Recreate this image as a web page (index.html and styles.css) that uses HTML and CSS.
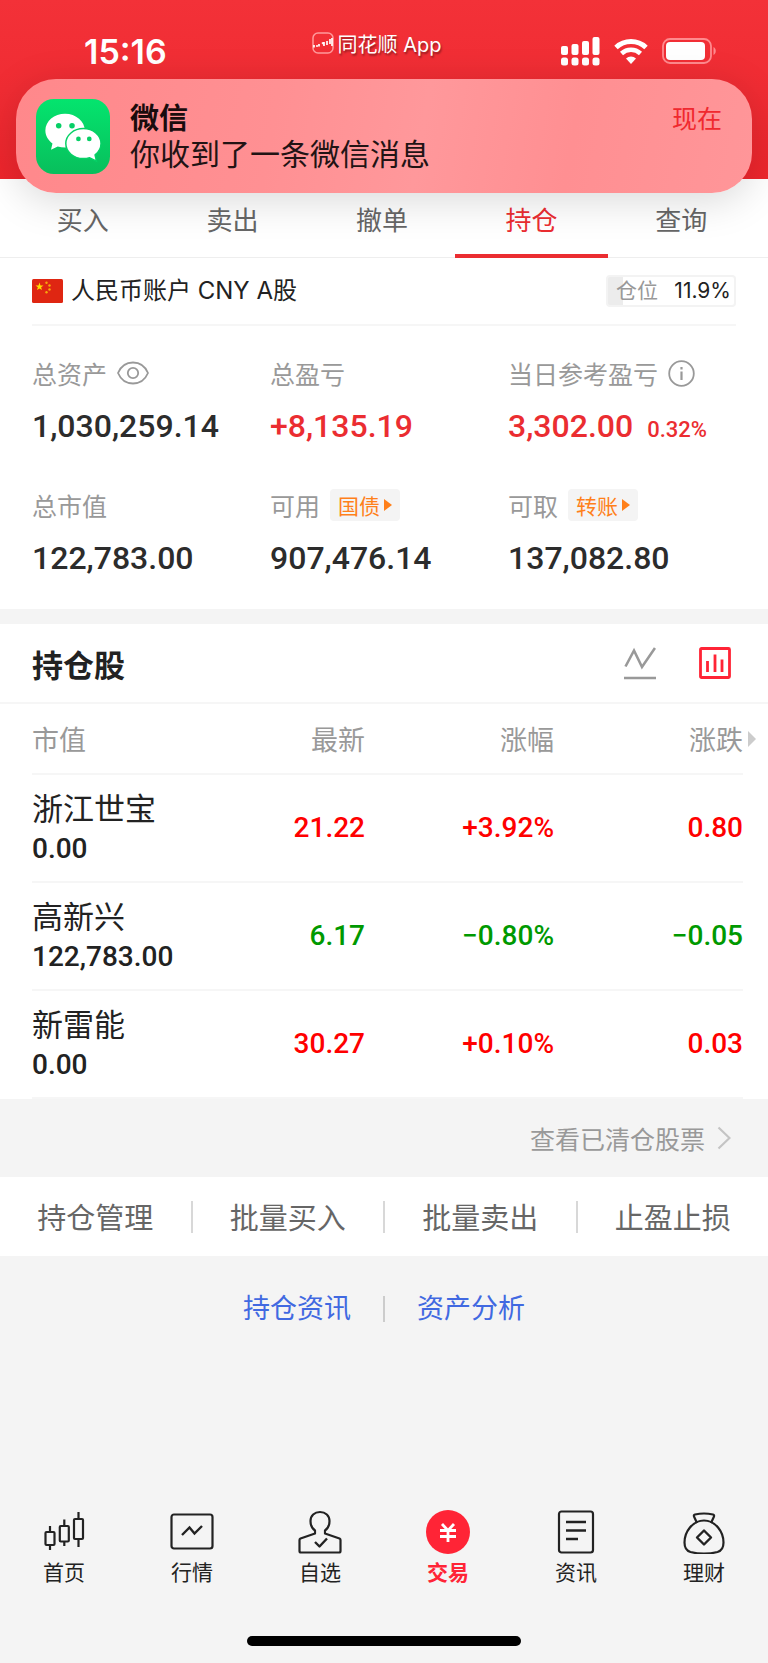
FILE: index.html
```html
<!DOCTYPE html>
<html lang="zh-CN">
<head>
	<meta charset="utf-8">
	<meta name="viewport" content="width=device-width, initial-scale=1"/>
	<title>持仓</title>
	<link rel="stylesheet" href="styles.css">
</head>
<body>
	<header class="top">
		<div class="status">
			<div class="clock">15:16</div>
			<div class="app">
				<svg width="22" height="22" viewBox="0 0 22 22" fill="none">
					<rect x="1" y="1" width="20" height="20" rx="5" stroke="#ff9a9c" stroke-width="1.5"/>
					<path d="M2 13v2.500M4 14h2M7 12v2.500M10 10.500l2 2M12 10v4M15 9v4M18 7v5M20 6v8" stroke="#fff" stroke-width="1.700"/>
				</svg>
				同花顺 App
			</div>
			<div class="signs">
				<svg width="39" height="29" viewBox="0 0 39 29" fill="#fff">
					<rect x="0" y="9" width="7" height="9" rx="2"/>
					<rect x="10.500" y="7" width="7" height="11" rx="2"/>
					<rect x="21" y="4" width="7" height="14" rx="2"/>
					<rect x="31.500" y="0" width="7" height="18" rx="2"/>
					<rect x="0" y="20.500" width="7" height="8" rx="2.500"/>
					<rect x="10.500" y="20.500" width="7" height="8" rx="2.500"/>
					<rect x="21" y="20.500" width="7" height="8" rx="2.500"/>
					<rect x="31.500" y="20.500" width="7" height="8" rx="2.500"/>
				</svg>
				<svg width="34" height="25" viewBox="0 0 34 25" fill="none" stroke="#fff">
					<path d="M2 8.500a22 22 0 0 1 30 0" stroke-width="5"/>
					<path d="M7.500 14.500a14 14 0 0 1 19 0" stroke-width="4.500"/>
					<path d="M17 25l-5-5.500a7.500 7.500 0 0 1 10 0z" fill="#fff" stroke="none"/>
				</svg>
				<svg width="55" height="26" viewBox="0 0 55 26">
					<rect x="1" y="1" width="48" height="24" rx="7" fill="none" stroke="#ff8a8e" stroke-width="1.800"/>
					<rect x="4" y="4" width="39" height="18" rx="4" fill="#fff"/>
					<path d="M51.500 9c3 1.500 3 6.500 0 8z" fill="#ff8a8e"/>
				</svg>
			</div>
		</div>
		<div class="notice">
			<svg width="74" height="75" viewBox="0 0 75 76">
				<defs>
					<linearGradient id="wx" x1="0" y1="0" x2="0" y2="1">
						<stop offset="0" stop-color="#04e46e"/>
						<stop offset="1" stop-color="#08bf5c"/>
					</linearGradient>
				</defs>
				<rect width="75" height="76" rx="18" fill="url(#wx)"/>
				<path d="M29.500 15C18.500 15 9.500 22.500 9.500 32c0 5.300 2.800 10 7.200 13.100L15.200 51.500l6.800-3.300c2.400.7 4.900 1 7.500 1 11 0 20-7.500 20-17S40.500 15 29.500 15z" fill="#fff"/>
				<path d="M48 30c-9.800 0-17.800 6.700-17.800 15.200S38.200 60.400 48 60.400c2.200 0 4.400-.3 6.300-.9l7 3.500-1.400-6.300c3.700-2.800 6-6.900 6-11.500C65.900 36.700 57.800 30 48 30z" fill="#fff" stroke="#06d166" stroke-width="1.500"/>
				<g fill="#07cf66">
					<circle cx="23" cy="27" r="2.800"/><circle cx="36.500" cy="27" r="2.800"/>
					<circle cx="43" cy="40.500" r="2.400"/><circle cx="54" cy="40.500" r="2.400"/>
				</g>
			</svg>
			<div class="msg">
				<div class="from">微信</div>
				<div>你收到了一条微信消息</div>
			</div>
			<div class="when">现在</div>
		</div>
	</header>

	<nav class="tabs">
		<a href="#">买入</a>
		<a href="#">卖出</a>
		<a href="#">撤单</a>
		<a href="#" class="on">持仓</a>
		<a href="#">查询</a>
	</nav>

	<section class="account">
		<div class="who">
			<svg width="31" height="24" viewBox="0 0 31 24">
				<rect width="31" height="24" rx="1.500" fill="#df2612"/>
				<path d="M7.500 3.500l1 2.900h3l-2.400 1.800.9 2.900-2.500-1.700L5 11.100l.9-2.900-2.400-1.800h3z" fill="#ffde00"/>
				<g fill="#f7a80c">
					<circle cx="14.500" cy="3.800" r="1.200"/><circle cx="17.500" cy="6.500" r="1.200"/>
					<circle cx="17.500" cy="10.500" r="1.200"/><circle cx="14.500" cy="13.300" r="1.200"/>
				</g>
			</svg>
			<span>人民币账户 CNY A股</span>
			<div class="ratio"><span>仓位</span><b>11.9%</b></div>
		</div>
		<div class="stats">
			<div>
				<div class="label">总资产
					<button class="ico" aria-label="隐藏金额"><svg width="32" height="24" viewBox="0 0 32 24" fill="none" stroke="#999" stroke-width="1.800">
						<path d="M1 12C7 -2 25 -2 31 12C25 26 7 26 1 12z"/>
						<circle cx="16" cy="12" r="5.200"/>
					</svg></button>
				</div>
				<div class="num">1,030,259.14</div>
			</div>
			<div>
				<div class="label">总盈亏</div>
				<div class="num red">+8,135.19</div>
			</div>
			<div>
				<div class="label">当日参考盈亏
					<button class="ico" aria-label="说明"><svg width="27" height="27" viewBox="0 0 27 27" fill="none" stroke="#999" stroke-width="1.800">
						<circle cx="13.500" cy="13.500" r="12.300"/>
						<path d="M13.500 11.500v8.500M13.500 7v2.500" stroke-width="2.200"/>
					</svg></button>
				</div>
				<div class="num red">3,302.00<small>0.32%</small></div>
			</div>
			<div>
				<div class="label">总市值</div>
				<div class="num">122,783.00</div>
			</div>
			<div>
				<div class="label">可用<button class="chip">国债</button></div>
				<div class="num">907,476.14</div>
			</div>
			<div>
				<div class="label">可取<button class="chip">转账</button></div>
				<div class="num">137,082.80</div>
			</div>
		</div>
	</section>

	<section class="hold">
		<div class="head">
			<h2>持仓股</h2>
			<button class="ico" aria-label="走势"><svg width="32" height="33" viewBox="0 0 32 33" fill="none" stroke="#999" stroke-width="2.600">
				<path d="M1.500 19.500L10 3.500l8 16.500L31 1M0 31h32"/>
			</svg></button>
			<button class="ico" aria-label="列表"><svg width="32" height="32" viewBox="0 0 32 32" fill="none" stroke="#ff2436" stroke-width="2.800">
				<rect x="1.500" y="1.500" width="29" height="29" rx="1"/>
				<path d="M8.500 14v11M16 7.500V25M23 12.500V25"/>
			</svg></button>
		</div>
		<table>
			<thead>
				<tr><th>市值</th><th>最新</th><th>涨幅</th><th class="more">涨跌</th></tr>
			</thead>
			<tbody>
				<tr class="up"><td><div class="name">浙江世宝</div>0.00</td><td>21.22</td><td>+3.92%</td><td>0.80</td></tr>
				<tr class="down"><td><div class="name">高新兴</div>122,783.00</td><td>6.17</td><td>−0.80%</td><td>−0.05</td></tr>
				<tr class="up"><td><div class="name">新雷能</div>0.00</td><td>30.27</td><td>+0.10%</td><td>0.03</td></tr>
			</tbody>
		</table>
	</section>

	<a href="#" class="cleared">查看已清仓股票
		<svg width="14" height="24" viewBox="0 0 14 24" fill="none" stroke="#c4c4c4" stroke-width="2.200"><path d="M1.500 1.500L12.500 12l-11 10.500"/></svg>
	</a>

	<div class="acts">
		<button>持仓管理</button>
		<button>批量买入</button>
		<button>批量卖出</button>
		<button>止盈止损</button>
	</div>

	<div class="links">
		<a href="#">持仓资讯</a>
		<a href="#">资产分析</a>
	</div>

	<nav class="bar">
		<a href="#">
			<svg width="44" height="44" viewBox="0 0 44 44" fill="none" stroke="#222" stroke-width="2.200">
				<rect x="3.500" y="22" width="9" height="13" rx="1"/><path d="M8 16v6M8 35v5"/>
				<rect x="17.800" y="16" width="9" height="15.500" rx="1"/><path d="M22.300 9.500V16M22.300 31.500V36"/>
				<rect x="32" y="9" width="9" height="20" rx="1"/><path d="M36.500 2v7M36.500 29v8"/>
			</svg>
			首页
		</a>
		<a href="#">
			<svg width="44" height="44" viewBox="0 0 44 44" fill="none" stroke="#222" stroke-width="2.200">
				<rect x="1.500" y="4.500" width="41" height="34" rx="2.500"/>
				<path d="M12 25l7.500-7.500 5 6L32 16" stroke-width="2.400"/>
			</svg>
			行情
		</a>
		<a href="#">
			<svg width="44" height="44" viewBox="0 0 44 44" fill="none" stroke="#222" stroke-width="2.200" stroke-linejoin="round">
				<path d="M17 20.500C13.500 18 12.500 14.500 12.500 11c0-5.500 4-9 9.500-9s9.500 3.500 9.500 9c0 3.500-1 7-4.500 9.500V23.500L41.500 28.500Q42.500 29 42.500 30V41q0 1.500-1.500 1.500H3q-1.500 0-1.500-1.500V30q0-1 1-1.500L17 23.500z"/>
				<path d="M17 32l4.500 4.500 7.500-8" stroke-width="2.400"/>
			</svg>
			自选
		</a>
		<a href="#" class="on">
			<svg width="44" height="44" viewBox="0 0 44 44" fill="none" stroke="#fff" stroke-width="2.800">
				<circle cx="22" cy="22" r="22" fill="#ff2436" stroke="none"/>
				<path d="M16 14l6 6.500 6-6.500M14 20.500h16M14 26.500h16M22 20.500V32"/>
			</svg>
			交易
		</a>
		<a href="#">
			<svg width="44" height="44" viewBox="0 0 44 44" fill="none" stroke="#222" stroke-width="2.200">
				<rect x="5" y="1.500" width="34" height="41" rx="2.500"/>
				<path d="M12 12h20M12 20.500h20M12 29h12" stroke-width="2.400"/>
			</svg>
			资讯
		</a>
		<a href="#">
			<svg width="44" height="44" viewBox="0 0 44 44" fill="none" stroke="#222" stroke-width="2.200" stroke-linejoin="round">
				<path d="M15 13l-3-6.500Q11.500 5 13 4.500q9-2 18 0 1.500.5 1 2L29 13"/>
				<path d="M22 10.500C10.500 10.500 2.500 22 2.500 32.500c0 6 2.500 8.500 6 9.500 8 2 19 2 27 0 3.500-1 6-3.500 6-9.500C41.500 22 33.500 10.500 22 10.500z"/>
				<path d="M22 20.500l7 7-7 7-7-7z" stroke-width="2.400"/>
			</svg>
			理财
		</a>
	</nav>
	<div class="home"></div>
</body>
</html>
```
FILE: styles.css
```css
* {
	box-sizing: border-box;
}
body {
	margin: 0;
	min-height: 100vh;
	display: flex;
	flex-direction: column;
	background-color: #f4f4f4;
	color: #222;
	font-family: Inter, "Noto Sans CJK SC", sans-serif;
}
a {
	color: inherit;
	text-decoration: none;
}
button {
	padding: 0;
	border: 0;
	background: none;
	color: inherit;
	font: inherit;
}
svg {
	display: block;
	flex: none;
}

.top {
	position: relative;
	height: 179px;
	background: linear-gradient(#f33138, #f02c33 50%, #ed252c);
}
.status {
	display: grid;
	grid-template-columns: 1fr auto 1fr;
	align-items: center;
	height: 102px;
	padding: 0 51px 0 36px;
	color: #fff;
}
.clock {
	padding-left: 48px;
	font-size: 34px;
	font-weight: 600;
}
.app {
	display: flex;
	align-items: center;
	gap: 4px;
	padding-bottom: 16px;
	font-size: 20px;
	text-shadow: 1px 2px 2px rgba(0,0,0,0.4);
}
.signs {
	display: flex;
	justify-content: flex-end;
	align-items: center;
	gap: 14px;
}
.notice {
	position: absolute;
	z-index: 1;
	top: 79px;
	left: 16px;
	right: 16px;
	height: 114px;
	display: flex;
	align-items: center;
	gap: 20px;
	padding: 0 30px 0 20px;
	border-radius: 40px;
	background: linear-gradient(100deg, #ff888b, #ff9093 35%, #ff989b 55%, #ff8f92 75%, #ff9699);
	box-shadow: 0 8px 40px rgba(0,0,0,0.15);
	color: #221314;
	font-size: 30px;
	line-height: 36px;
}
.msg {
	flex: 1;
	padding-top: 2px;
}
.from {
	font-size: 29px;
	line-height: 34px;
	font-weight: bold;
	color: #1a0c0d;
}
.when {
	align-self: flex-start;
	margin-top: 22px;
	font-size: 25px;
	color: #f0282e;
}

.tabs {
	display: flex;
	padding: 0 12px 0 8px;
	background-color: #fff;
	border-bottom: 1px solid #eee;
	color: #666;
	font-size: 26px;
}
.tabs a {
	position: relative;
	flex: 1;
	height: 78px;
	line-height: 83px;
	text-align: center;
}
.tabs .on {
	color: #eb2d31;
}
.tabs .on::after {
	content: "";
	position: absolute;
	left: -2px;
	right: -2px;
	bottom: -1px;
	height: 4px;
	background-color: #eb2d31;
}

.account {
	background-color: #fff;
}
.who {
	display: flex;
	align-items: center;
	gap: 8px;
	height: 68px;
	margin: 0 32px;
	border-bottom: 2px solid #f6f6f6;
	font-size: 24px;
	line-height: 30px;
}
.ratio {
	display: flex;
	align-items: center;
	justify-content: space-between;
	width: 130px;
	height: 32px;
	margin-left: auto;
	padding: 0 3px 0 8px;
	border: 2px solid #f3f3f3;
	border-radius: 4px;
	background: linear-gradient(90deg, #ececec 12%, #fff 12%);
	font-size: 21px;
	color: #999;
}
.ratio b {
	font-weight: normal;
	color: #222;
}
.stats {
	display: grid;
	grid-template-columns: repeat(3, 1fr);
	gap: 32px 0;
	padding: 31px 22px 20px 32px;
}
.label {
	display: flex;
	align-items: center;
	gap: 10px;
	height: 32px;
	color: #999;
	font-size: 25px;
	white-space: nowrap;
}
.num {
	height: 68px;
	line-height: 74px;
	font-family: Roboto, sans-serif;
	font-size: 32px;
	font-weight: 500;
	color: #2c2c2c;
}
.red {
	color: #eb2d31;
}
.num small {
	margin-left: 14px;
	font-size: 22px;
}
.chip {
	display: flex;
	align-items: center;
	gap: 4px;
	height: 32px;
	padding: 0 8px;
	border-radius: 4px;
	background-color: #f4f4f4;
	color: #ff801a;
	font-size: 21px;
}
.chip::after {
	content: "";
	border: solid transparent;
	border-width: 6px 0 6px 8px;
	border-left-color: #ff801a;
}

.hold {
	margin-top: 15px;
	background-color: #fff;
}
.head {
	display: flex;
	align-items: center;
	gap: 43px;
	height: 80px;
	padding: 0 37px 0 32px;
	border-bottom: 2px solid #f6f6f6;
}
.head h2 {
	flex: 1;
	margin: 0;
	font-size: 31px;
}
table {
	width: calc(100% - 57px);
	margin: 0 25px 0 32px;
	table-layout: fixed;
	border-collapse: collapse;
}
th {
	position: relative;
	width: 189px;
	height: 70px;
	padding: 0;
	border-bottom: 2px solid #f6f6f6;
	color: #999;
	font-size: 27px;
	font-weight: normal;
	text-align: right;
}
th:first-child {
	width: auto;
	text-align: left;
}
.more::after {
	content: "";
	position: absolute;
	left: calc(100% + 5px);
	top: 27px;
	border: solid transparent;
	border-width: 8px 0 8px 8px;
	border-left-color: #ccc;
}
td {
	height: 108px;
	padding: 0;
	border-bottom: 2px solid #f6f6f6;
	font: 500 28px/38px Roboto, sans-serif;
	text-align: right;
	white-space: nowrap;
}
td:first-child {
	color: #222;
	text-align: left;
}
.name {
	margin-bottom: 4px;
	font: 31px/38px "Noto Sans CJK SC", sans-serif;
}
.up {
	color: #f00;
}
.down {
	color: #090;
}

.cleared {
	display: flex;
	align-items: center;
	justify-content: flex-end;
	gap: 12px;
	height: 78px;
	padding-right: 37px;
	color: #999;
	font-size: 25px;
}
.acts {
	display: flex;
	align-items: center;
	height: 79px;
	background-color: #fff;
	color: #666;
	font-size: 29px;
}
.acts button {
	flex: 1;
	height: 32px;
	line-height: 36px;
}
.acts button + button {
	border-left: 2px solid #d8d8d8;
}
.links {
	display: flex;
	justify-content: center;
	margin-top: 40px;
	color: #4169e1;
	font-size: 27px;
	line-height: 26px;
}
.links a {
	padding: 0 32px;
}
.links a + a {
	border-left: 2px solid #ccc;
}

.bar {
	display: flex;
	margin-top: auto;
	font-size: 21px;
	line-height: 32px;
}
.bar a {
	flex: 1;
	display: flex;
	flex-direction: column;
	align-items: center;
	gap: 3px;
}
.bar .on {
	color: #ff2436;
	font-weight: bold;
}
.home {
	width: 274px;
	height: 10px;
	margin: 47px auto 17px;
	border-radius: 5px;
	background-color: #000;
}
```
